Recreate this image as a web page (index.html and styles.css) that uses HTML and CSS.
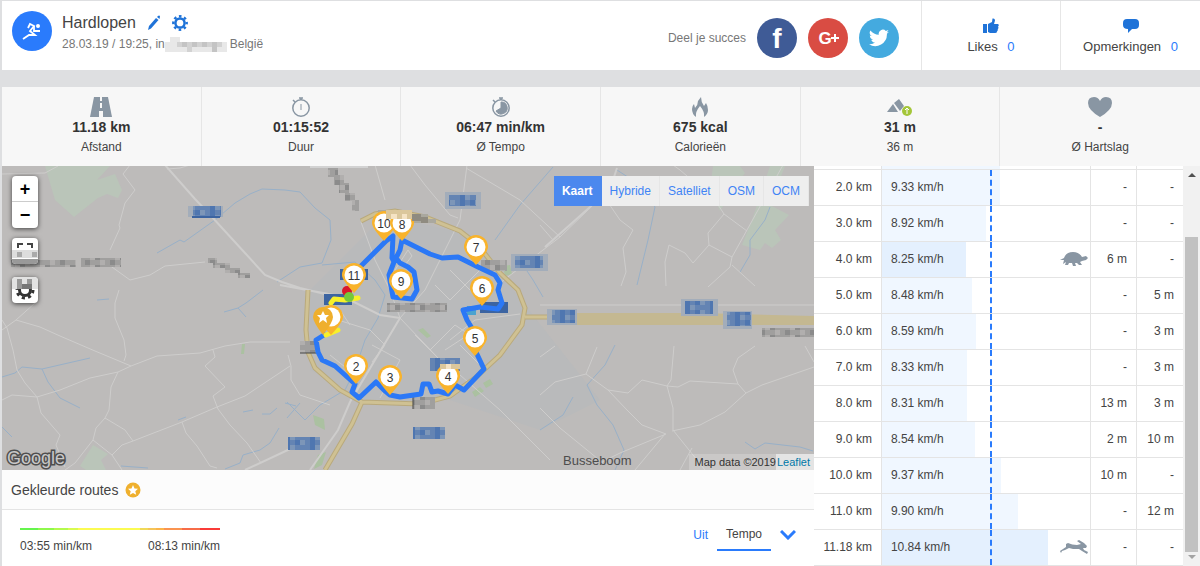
FILE: index.html
```html
<!DOCTYPE html>
<html lang="nl">

<head>
    <meta charset="UTF-8">
    <meta name="viewport" content="width=device-width, initial-scale=1.0">
    <title>Hardlopen</title>
    <link rel="stylesheet" href="styles.css">
</head>

<body>

    <header class="activity">
        <div class="sport-icon">
            <svg width="22" height="20" viewBox="0 0 22 20" fill="none" stroke="#fff" stroke-width="2">
                <circle cx="17" cy="5" r="2" fill="#fff" stroke="none" />
                <path d="M7 7L9 3L13 5L9 10L14 14L8 14L2 18" stroke-width="1.800" />
                <path d="M13 5L13 10L19 10" stroke-width="1.800" />
            </svg>
        </div>
        <div class="activity-info">
            <div class="title-row">
                <h1>Hardlopen</h1>
                <button type="button" class="icon-btn" aria-label="Bewerken">
                    <svg width="14" height="16" viewBox="0 0 14 16" fill="#1f73d8">
                        <path d="M1 15L2 11L9 3L11.500 5L4 13.500zM10 2L11 1Q12.500 0 13 1.500L12.500 4z" />
                    </svg>
                </button>
                <button type="button" class="icon-btn" aria-label="Instellingen">
                    <svg width="16" height="16" viewBox="0 0 16 16" fill="none" stroke="#1f73d8">
                        <circle cx="8" cy="8" r="4.600" stroke-width="2.500" />
                        <circle cx="8" cy="8" r="6.700" stroke-width="2.400" stroke-dasharray="2.600 2.660" stroke-dashoffset="1.300" />
                    </svg>
                </button>
            </div>
            <p class="meta">28.03.19 / 19:25, in
                <svg class="hidden-place" width="62" height="15" viewBox="0 0 62 15" aria-hidden="true">
                    <path fill="#e8e8e8" d="M0 5h5V0h10v5h47v10H0z" />
                    <path fill="#c4c4c4" d="M17 5h5v5h-5zM27 5h5v5h-5zM37 5h5v5h-5zM47 5h5v10h-5z" />
                    <path fill="#d2d2d2" d="M12 5h5v5h-5zM22 5h5v10h-5zM32 5h5v5h-5zM42 5h5v5h-5zM52 5h5v5h-5z" />
                </svg>
                België</p>
        </div>

        <div class="share">
            <span>Deel je succes</span>
            <a href="#" class="social facebook" aria-label="Facebook">
                <svg width="40" height="40" viewBox="0 0 40 40"><text x="20" y="30" class="logo-f">f</text></svg>
            </a>
            <a href="#" class="social google" aria-label="Google+">
                <svg width="40" height="40" viewBox="0 0 40 40"><text x="17" y="26" class="logo-g">G</text><path d="M26 16h2v3h3v2h-3v3h-2v-3h-3v-2h3z" fill="#fff" /></svg>
            </a>
            <a href="#" class="social twitter" aria-label="Twitter">
                <svg width="20" height="18" viewBox="0 0 24 20" fill="#fff">
                    <path d="M24 2.400a10 10 0 0 1-2.800.8A5 5 0 0 0 23.300.500a10 10 0 0 1-3.100 1.200A4.900 4.900 0 0 0 11.800 6.200 14 14 0 0 1 1.700 1a4.900 4.900 0 0 0 1.500 6.600 5 5 0 0 1-2.200-.6c0 2.400 1.600 4.400 3.900 4.900a5 5 0 0 1-2.200.1 4.900 4.900 0 0 0 4.600 3.400A10 10 0 0 1 0 17.400 14 14 0 0 0 21.500 5z" />
                </svg>
            </a>
        </div>

        <button type="button" class="social-count likes">
            <svg width="16" height="16" viewBox="0 0 16 16" fill="#1f73d8">
                <path d="M0 6h4v9H0z M5 6 L9 4 L9.500 0.500 Q12 0 12 2.500 L11 6 H15 Q16.500 7 15 8.500 Q16 10 14.800 11 Q15 13 14 13.500 Q14 15 12 15 H7 L5 14z" />
            </svg>
            <span>Likes <b>0</b></span>
        </button>
        <button type="button" class="social-count comments">
            <svg width="16" height="16" viewBox="0 0 16 16" fill="#1f73d8">
                <path d="M4 1h8q4 0 4 4v2q0 4-4 4H9l-4 4v-4Q0 11 0 7V5q0-4 4-4z" />
            </svg>
            <span>Opmerkingen <b>0</b></span>
        </button>
    </header>

    <!-- kerncijfers -->
    <section class="stats">
        <div class="stat">
            <svg width="22" height="20" viewBox="0 0 22 20">
                <path fill="#8996a3" d="M4 0h14l4 20H0z" />
                <path fill="#f7f7f7" d="M10 0h2v4h-2zM10 6h2v5h-2zM9 14h4v6H9z" />
            </svg>
            <strong>11.18 km</strong>
            <span>Afstand</span>
        </div>
        <div class="stat">
            <svg width="20" height="20" viewBox="0 0 20 20" fill="none" stroke="#8996a3">
                <circle cx="10" cy="11" r="8.200" stroke-width="1.500" />
                <path d="M8 1h4M10 1v2M2 3l2 2" stroke-width="1.500" />
                <path d="M10 7v6" />
            </svg>
            <strong>01:15:52</strong>
            <span>Duur</span>
        </div>
        <div class="stat">
            <svg width="20" height="20" viewBox="0 0 20 20" fill="none" stroke="#8996a3">
                <circle cx="10" cy="11" r="8.200" stroke-width="1.500" />
                <path d="M8 1h4M10 1v2M2 3l2 2" stroke-width="1.500" />
                <path d="M10 11V5a6 6 0 1 1-5 9z" fill="#8996a3" />
            </svg>
            <strong>06:47 min/km</strong>
            <span>Ø Tempo</span>
        </div>
        <div class="stat">
            <svg width="18" height="20" viewBox="0 0 18 20" fill="#8996a3">
                <path d="M5 20Q1 17 1 12Q1 9 3 7L4 11Q7 8 7 4L10 0Q10 5 13 9L15 6Q17 9 17 13Q17 17 13 20Q14 15 9 9Q4 15 5 20z" />
            </svg>
            <strong>675 kcal</strong>
            <span>Calorieën</span>
        </div>
        <div class="stat">
            <svg width="26" height="20" viewBox="0 0 26 20">
                <path fill="#8996a3" d="M0 15L6 7L11 15zM7 6L12 2L17 9L13 14z" />
                <circle cx="20" cy="14" r="5" fill="#a4c639" />
                <path d="M20 17v-5M18 13l2-2 2 2" stroke="#fff" fill="none" />
            </svg>
            <strong>31 m</strong>
            <span>36 m</span>
        </div>
        <div class="stat">
            <svg width="26" height="20" viewBox="0 0 26 20" fill="#8996a3">
                <path d="M13 20Q1 13 1 6Q1 0 7 0Q11 0 13 4Q15 0 19 0Q25 0 25 6Q25 13 13 20z" />
            </svg>
            <strong>-</strong>
            <span>Ø Hartslag</span>
        </div>
    </section>

    <main class="content">
        <div class="left">
            <div class="map">
                <svg class="map-canvas" viewBox="2 166 812 304" preserveAspectRatio="xMidYMid slice">
                    <defs>
                        <pattern id="mosaic-blue" width="25" height="10" patternUnits="userSpaceOnUse">
                            <path fill="#6484b3" d="M0 0h25v10H0z" />
                            <path fill="#7d96b8" d="M0 0h5v5H0zM15 5h5v5h-5z" />
                            <path fill="#4f76b0" d="M10 0h5v10h-5zM20 0h5v5h-5z" />
                        </pattern>
                        <pattern id="mosaic-gray" width="25" height="10" patternUnits="userSpaceOnUse">
                            <path fill="#a09f9e" d="M0 0h25v10H0z" />
                            <path fill="#b1afae" d="M0 0h5v5H0zM15 5h5v5h-5z" />
                            <path fill="#8b8b8b" d="M10 0h5v5h-5zM20 5h5v5h-5z" />
                        </pattern>
                        <g id="pin">
                            <path fill="#f9b32b" d="M-12 0A12 12 0 1 1 12 0Q12 5 0 18Q-12 5-12 0z" />
                            <circle r="9.500" fill="#fff" />
                        </g>
                    </defs>

                    <rect x="2" y="166" width="812" height="304" fill="#bdbbba" />
                    <path fill="#b9babb" d="M310 290L385 215L470 235L525 305L600 400L540 430L450 400L370 402L310 370z" />

                    <!-- parken -->
                    <g fill="#bac5b9">
                        <path d="M45 166H110L97 180L115 174L122 190L118 198L107 194L98 198L84 209L74 217L55 200z" />
                        <path d="M93 445L108 454L101 460L106 470H86L80 466z" />
                        <path d="M713 166H740L745 173L733 190L720 211L710 190z" />
                        <path d="M770 166H785L770 205L789 215L775 230L781 240L772 248L765 243L760 250L742 245L752 220z" />
                        <path fill="#abc1a1" d="M242 344H245L244 354H241zM418 330L423 328L431 336L427 338zM472 392L480 387L484 391L475 397zM483 383L490 379L493 384L486 388zM503 266L510 265L512 274L505 276zM313 415L324 419L325 430L315 425zM318 455L326 452L322 465L314 469z" />
                    </g>

                    <!-- water -->
                    <g class="water">
                        <path d="M157 253L180 240L184 242L215 220L235 203L250 194L262 189L285 190L300 192L315 208L330 220L331 240L322 263L300 267L277 282" />
                        <path d="M263 290L250 300L246 303L238 308L224 312M238 308L246 317M97 300L109 299" />
                        <path d="M2 377L15 373L22 367L42 369L90 358M42 369L48 382L60 398L80 408M2 427L12 437" />
                        <path d="M279 428L270 443L260 450L243 455L240 463L225 469M121 466L148 468M287 418L300 403M285 403L296 406M243 412L253 410M262 414L270 414L277 408M178 420L186 417" />
                        <path d="M322 265L355 262L375 280L385 295L378 318L365 340L355 370L345 390L320 405L305 420L287 402" />
                        <path d="M553 167L520 205L495 240M523 265L533 280L543 297" />
                        <path d="M617 170L640 185L655 207L648 240L637 285M615 345L605 365L587 385L597 405L613 425L624 450L615 470" />
                        <path d="M540 430L563 415L573 397M770 207L765 220L750 240L750 255L740 272M745 442L755 449L765 443L800 447L813 451" />
                    </g>

                    <!-- wegen -->
                    <g class="road">
                        <path d="M2 174L45 173L58 166M130 165L123 174L135 190L125 203L119 225L120 228L110 250M119 290L115 303V318L124 340L126 355L124 361" />
                        <path d="M35 303L16 320L2 330M16 320L40 327L60 336L95 351L131 366L157 356L200 353L225 346L250 342L290 342" />
                        <path d="M2 320L7 328L13 350L17 370L25 383L37 397L12 395L2 400M37 397L41 413L60 435L56 445L65 467" />
                        <path d="M37 397L60 390L90 378L118 372L131 366M118 372L111 387L109 410L105 418L96 428L93 440L75 463L65 470" />
                        <path d="M105 418L125 430L133 441M93 440L112 455L122 470M112 455L122 445L133 441L182 422L217 407L245 396L290 366" />
                        <path d="M182 422L186 433L197 446L210 466L217 468M213 350L215 357L205 366L225 387L213 396L218 409L230 425L247 443L261 463" />
                        <path d="M288 355L291 366V380L300 395L330 405M167 169L180 168L190 165M105 262L130 280L150 275L165 266L205 262" />
                        <path d="M385 200L375 165M410 165L425 185L450 215L458 218M466 168L520 200L560 237M500 283L560 237L617 182" />
                        <path d="M467 165L460 220L445 250L425 290L400 318M361 222L375 260L390 290L400 318M400 318L440 360L460 375L500 410L550 460" />
                        <path d="M540 225L553 240M605 198L620 220L633 230L623 248L626 272L621 286M540 305H814" />
                        <path d="M666 286L665 262L669 245L685 253L693 263L709 245L708 233L724 214L747 231M709 245L732 257L783 165M732 257L730 267L708 287M724 214L715 200L680 170L673 165M732 265L755 286" />
                        <path d="M674 346L671 380L667 386L673 408V430L705 470M540 395L555 382L586 374L608 390L627 410L642 425L666 434L620 453L600 463M586 374L597 347" />
                        <path d="M608 390L628 393L642 380L667 386L678 387L690 381L738 384L746 393L725 412L700 425L672 431M738 384L733 370L738 358L755 346" />
                        <path d="M746 393L762 385L814 367M805 346L814 362M665 434L635 470M692 448L680 470M540 408L560 428L603 463M540 357L555 346" />
                        <path d="M330 355L345 367M372 345L400 360L380 398M338 320L370 330L385 345L372 362M400 318L370 368L350 400M415 335L430 350L455 325L470 335M430 350L450 370M435 285L450 300L480 270M450 270L470 290M395 270L408 250L412 256L405 265M460 345L480 365M450 340L475 320L520 314M445 350L468 335M340 310L350 325" />
                    </g>
                    <path class="road wide" d="M165 165L195 199L212 217L245 253L265 275L282 282L300 288L350 300L380 315L400 318M245 470L290 449M617 168L612 183L590 207L545 247M400 318L350 402L338 430L310 470M280 285L345 297" />

                    <!-- ringweg -->
                    <path class="ring edge" d="M361 221L375 214L395 211L425 217L460 231L478 245L500 273L518 290L525 308L522 325L500 355L475 378L450 396L420 404L362 402L340 390L315 368L308 352L306 330L308 290M362 402L352 424L325 470M525 317H570" />
                    <path class="ring" d="M361 221L375 214L395 211L425 217L460 231L478 245L500 273L518 290L525 308L522 325L500 355L475 378L450 396L420 404L362 402L340 390L315 368L308 352L306 330L308 290M362 402L352 424L325 470M525 317H570" />
                    <path fill="#c4b891" d="M560 313H700L814 316V325H560z" />

                    <!-- wegnummers en plaatsnamen -->
                    <path fill="#a3adba" d="M188 206H223V217H188zM445 192H481V209H445zM511 254H548V271H511zM681 299H718V316H681zM723 311H752V329H723zM547 309H577V325H547z" />
                    <path fill="url(#mosaic-blue)" d="M193 206H221V217H193zM449 195H476V206H449zM515 256H543V268H515zM685 301H713V314H685zM727 312H751V326H727zM552 310H575V323H552zM288 437H320V450H288zM413 427H445V439H413zM430 358H460V371H430z" />
                    <path fill="#3c64a1" d="M192 216H220V218H192zM340 269H368V280H340zM324 294H352V305H324zM480 302H508V313H480z" />
                    <rect x="467" y="306" width="9" height="9" fill="#4ba3cf" />
                    <path fill="url(#mosaic-gray)" d="M11 260H76V267H11zM81 258H121V267H81zM300 341H318V353H300zM413 397H435V409H413zM481 260H507V271H481zM762 328H814V337H762z" />
                    <path fill="url(#mosaic-gray)" d="M208 258H217V263H230V268H240V273H250V278H238V273H225V268H213V263H208zM328 168H338V175H344V183H349V193H355V200H359V211H352V201H345V193H339V185H334V177H328z" />
                    <path fill="#aaa89e" d="M378 210H405V214H428V219H436V223H410V218H378z" />
                    <path d="M300 353H318M413 397V409" stroke="#444" />
                    <path d="M310 166H368V168H310z" fill="#d2d2d2" />
                    <text x="563" y="465" class="place">Busseboom</text>

                    <!-- route -->
                    <path class="route" d="M350 288L358 269L386 241L393 236L392 258L394 262L389 275L393 297L412 299L417 290L414 272L408 267L400 263L396 258L400 250L402 240L418 248L430 254L442 258L458 257L468 262L478 267L495 275L500 283L498 290L502 303L498 309L480 307L463 310L467 320L473 330L475 350L484 369L464 390L455 385L448 394L438 391L432 392L429 384L423 384L421 394L400 397L390 395L384 390L376 382L359 398L352 392L355 384L335 366L322 360L318 352L316 340L324 335" />
                    <path class="route slow" d="M326 335L338 330M331 303L334 299L345 300L358 298" />
                    <rect x="387" y="303" width="60" height="9" fill="url(#mosaic-gray)" />

                    <circle cx="347" cy="291" r="5" fill="#d8182b" />
                    <circle cx="349" cy="297" r="5" fill="#74c83a" />
                    <g class="pins">
                        <g transform="translate(384 223)"><use href="#pin" /><text y="5">10</text></g>
                        <g transform="translate(402 223)"><use href="#pin" /><text y="6">8</text></g>
                        <g transform="translate(354 275)"><use href="#pin" /><text y="5">11</text></g>
                        <g transform="translate(401 281)"><use href="#pin" /><text y="5">9</text></g>
                        <g transform="translate(476 247)"><use href="#pin" /><text y="5">7</text></g>
                        <g transform="translate(482 288)"><use href="#pin" /><text y="5">6</text></g>
                        <g transform="translate(475 338)"><use href="#pin" /><text y="5">5</text></g>
                        <g transform="translate(448 376)"><use href="#pin" /><text y="5">4</text></g>
                        <g transform="translate(390 377)"><use href="#pin" /><text y="5">3</text></g>
                        <g transform="translate(356 366)"><use href="#pin" /><text y="5">2</text></g>
                        <use href="#pin" x="331" y="317" />
                        <g transform="translate(323 317)">
                            <path fill="#efaf2d" d="M-10 0A10 10 0 1 1 10 0Q10 5 0 18Q-10 5-10 0z" />
                            <path fill="#fff" d="M0-6L2-2L6-2L3 1L4 6L0 3L-4 6L-3 1L-6-2L-2-2z" />
                        </g>
                    </g>
                    <!-- vervaagde strook over de spelden 8, 10 en 4 -->
                    <path fill="#dbc79c" d="M386 210H412V219H386zM440 364H460V369H440z" />
                    <path fill="#f5e3c4" d="M391 214H397V219H391zM402 214H407V219H402zM446 364H451V369H446z" />
                    <path fill="#8f8b80" d="M412 214H421V221H412zM421 217H428V223H421z" />

                    <text x="7" y="464" class="google-logo">Google</text>
                </svg>

                <div class="map-tools">
                    <div class="zoom">
                        <button type="button" aria-label="Inzoomen">+</button>
                        <button type="button" aria-label="Uitzoomen">−</button>
                    </div>
                    <button type="button" class="tool" aria-label="Volledig scherm">
                        <svg width="26" height="26" viewBox="0 0 26 26">
                            <path d="M6 10V6h5M15 6h5v4" fill="none" stroke="#444" stroke-width="2" />
                            <path fill="#ddd" d="M0 12h26v8H0z" />
                            <path fill="#aaa" d="M5 14h5v5H5zM20 14h5v5h-5z" />
                            <path fill="#999" d="M0 21h26v5H0z" />
                        </svg>
                    </button>
                    <button type="button" class="tool" aria-label="Kaartinstellingen">
                        <svg width="26" height="26" viewBox="0 0 26 26">
                            <g fill="none" stroke="#333">
                                <circle cx="13" cy="13" r="5.500" stroke-width="3" />
                                <circle cx="13" cy="13" r="8" stroke-width="3" stroke-dasharray="3.140 3.143" />
                            </g>
                            <path fill="#e2e2e2" d="M0 0h26v12H0z" />
                            <path fill="#999" d="M5 2h5v5H5zM15 2h5v5h-5zM5 7h5v5H5z" />
                            <path fill="#777" d="M10 7h10v5H10z" />
                        </svg>
                    </button>
                </div>

                <div class="map-types">
                    <button type="button" class="on">Kaart</button>
                    <button type="button">Hybride</button>
                    <button type="button">Satelliet</button>
                    <button type="button">OSM</button>
                    <button type="button">OCM</button>
                </div>

                <div class="attribution">
                    <span>Map data ©2019</span>
                    <a href="#">Leaflet</a>
                </div>
            </div>

            <div class="routes-title">
                <h2>Gekleurde routes</h2>
                <svg width="16" height="16" viewBox="0 0 16 16">
                    <circle cx="8" cy="8" r="7.500" fill="#efb02e" />
                    <path fill="#fff" d="M8 3l1.500 3.500 3.500.3-2.700 2.400.9 3.600L8 10.900l-3.200 1.900.9-3.600L3 6.800l3.500-.3z" />
                </svg>
            </div>
            <div class="routes-body">
                <div class="legend">
                    <div class="legend-bar"></div>
                    <div class="legend-labels">
                        <span>03:55 min/km</span>
                        <span>08:13 min/km</span>
                    </div>
                </div>
                <div class="route-tabs">
                    <button type="button">Uit</button>
                    <button type="button" class="on">Tempo</button>
                    <button type="button" class="more" aria-label="Meer">
                        <svg width="16" height="10" viewBox="0 0 16 10" fill="none" stroke="#2a7bfc" stroke-width="3"><path d="M1 1l7 7 7-7" /></svg>
                    </button>
                </div>
            </div>
        </div>

        <!-- tussentijden -->
        <div class="splits">
            <table>
                <tbody>
                    <tr class="cut"><td></td><td class="speed"><div class="bar" style="width: 56.5%"></div></td><td></td><td></td></tr>
                    <tr><td>2.0 km</td><td class="speed"><div class="bar" style="width: 56.5%"></div><span>9.33 km/h</span></td><td>-</td><td>-</td></tr>
                    <tr><td>3.0 km</td><td class="speed"><div class="bar" style="width: 50.2%"></div><span>8.92 km/h</span></td><td>-</td><td>-</td></tr>
                    <tr>
                        <td>4.0 km</td>
                        <td class="speed"><div class="bar extreme" style="width: 40.2%"></div><span>8.25 km/h</span>
                            <svg class="animal" width="28" height="16" viewBox="0 0 28 16" fill="#8996a3">
                                <path d="M0 9L4 7Q6 1 13 1Q19 1 22 6L26 5L28 7L26 9L22 10L20 11L22 14H19L17 12H15L16 15H13L12 12H9L8 14H5L6 11L3 13L4 9z" />
                            </svg>
                        </td>
                        <td>6 m</td><td>-</td>
                    </tr>
                    <tr><td>5.0 km</td><td class="speed"><div class="bar" style="width: 43.5%"></div><span>8.48 km/h</span></td><td>-</td><td>5 m</td></tr>
                    <tr><td>6.0 km</td><td class="speed"><div class="bar" style="width: 45%"></div><span>8.59 km/h</span></td><td>-</td><td>3 m</td></tr>
                    <tr><td>7.0 km</td><td class="speed"><div class="bar" style="width: 41.1%"></div><span>8.33 km/h</span></td><td>-</td><td>3 m</td></tr>
                    <tr><td>8.0 km</td><td class="speed"><div class="bar" style="width: 40.7%"></div><span>8.31 km/h</span></td><td>13 m</td><td>3 m</td></tr>
                    <tr><td>9.0 km</td><td class="speed"><div class="bar" style="width: 44.5%"></div><span>8.54 km/h</span></td><td>2 m</td><td>10 m</td></tr>
                    <tr><td>10.0 km</td><td class="speed"><div class="bar" style="width: 57.4%"></div><span>9.37 km/h</span></td><td>10 m</td><td>-</td></tr>
                    <tr><td>11.0 km</td><td class="speed"><div class="bar" style="width: 65.5%"></div><span>9.90 km/h</span></td><td>-</td><td>12 m</td></tr>
                    <tr>
                        <td>11.18 km</td>
                        <td class="speed"><div class="bar extreme" style="width: 79.9%"></div><span>10.84 km/h</span>
                            <svg class="animal" width="28" height="16" viewBox="0 0 28 16" fill="#8996a3">
                                <path d="M0 12L6 8L6 5L8 4Q12 6 17 6L21 5L17 2L19 1L24 4L27 7L26 9L23 9L24 11L28 13L27 15L22 12L19 10L13 10L9 9L5 11L2 12L1 14z" />
                            </svg>
                        </td>
                        <td>-</td><td>-</td>
                    </tr>
                </tbody>
            </table>
            <div class="scrollbar" aria-hidden="true">
                <i class="arrow up"></i>
                <i class="thumb"></i>
                <i class="arrow down"></i>
            </div>
        </div>
    </main>

</body>

</html>
```

FILE: styles.css
```css
* {
    box-sizing: border-box;
}

body {
    margin: 0;
    padding: 1px 0 0 2px;
    background: #dedfe1;
    color: #444;
    font-family: "Liberation Sans", Arial, sans-serif;
    font-size: 12px;
}

h1,
h2,
p {
    margin: 0;
    font-weight: normal;
}

button {
    margin: 0;
    padding: 0;
    border: none;
    background: none;
    font: inherit;
    color: inherit;
    cursor: pointer;
}

svg {
    display: block;
}

/* kop */
.activity {
    display: flex;
    height: 69px;
    background: #fff;
}

.sport-icon {
    display: flex;
    align-items: center;
    justify-content: center;
    width: 40px;
    height: 40px;
    margin: 10px 10px 0;
    border-radius: 50%;
    background: #2a7bfc;
}

.activity-info {
    flex: 1;
    padding-top: 12px;
}

.title-row {
    display: flex;
    align-items: center;
    gap: 11px;
    height: 20px;
}

h1 {
    font-size: 16px;
}

.meta {
    display: flex;
    align-items: center;
    height: 20px;
    margin-top: 1px;
    color: #777;
}

.hidden-place {
    margin-right: 3px;
}

.share {
    display: flex;
    align-items: center;
    gap: 11px;
    margin: 5px 22px 0 0;
    color: #777;
}

.social {
    display: flex;
    align-items: center;
    justify-content: center;
    width: 40px;
    height: 40px;
    border-radius: 50%;
}

.facebook { background: #3f5b96; }
.google { background: #d94c43; }
.twitter { background: #44aadf; }

.logo-f,
.logo-g {
    fill: #fff;
    font-weight: bold;
    text-anchor: middle;
}

.logo-f { font-size: 28px; }
.logo-g { font-size: 17px; }

.social-count {
    display: flex;
    flex-direction: column;
    align-items: center;
    gap: 5px;
    padding-top: 17px;
    border-left: 1px solid #e6e6e6;
    font-size: 13px;
}

.social-count b {
    margin-left: 6px;
    color: #2a7bfc;
    font-weight: normal;
}

.likes { width: 139px; }
.comments { width: 140px; }

/* kerncijfers */
.stats {
    display: grid;
    grid-template-columns: repeat(6, 1fr);
    margin-top: 17px;
    background: #f7f7f7;
}

.stat {
    display: flex;
    flex-direction: column;
    align-items: center;
    height: 79px;
    padding-top: 10px;
    border-right: 1px solid #e6e6e6;
}

.stat:last-child {
    border-right: none;
}

.stat strong {
    height: 20px;
    color: #333;
    font-size: 14px;
    line-height: 20px;
}

.stat span {
    line-height: 20px;
}

.content {
    display: grid;
    grid-template-columns: minmax(0, 1fr) 386px;
}

.left {
    background: #fff;
}

/* kaart */
.map {
    position: relative;
    height: 304px;
}

.map-canvas {
    width: 100%;
    height: 100%;
}

.water {
    fill: none;
    stroke: #98b0c8;
}

.road {
    fill: none;
    stroke: #cecdcc;
    stroke-width: 1px;
}

.road.wide {
    stroke-width: 2px;
}

.ring {
    fill: none;
    stroke: #cfc193;
    stroke-width: 3px;
}

.ring.edge {
    stroke: #b9a97c;
    stroke-width: 5px;
}

.route {
    fill: none;
    stroke: #2b78f6;
    stroke-width: 5px;
    stroke-linejoin: round;
    stroke-linecap: round;
}

.route.slow {
    stroke: #f7f02a;
}

.pins text {
    fill: #333;
    font-size: 12px;
    text-anchor: middle;
}

.place {
    fill: #4d4d4d;
    font-size: 13px;
}

.google-logo {
    fill: #c9c8c8;
    stroke: #4f4f4f;
    stroke-width: 3px;
    paint-order: stroke;
    font-size: 18px;
}

.map-tools {
    position: absolute;
    top: 10px;
    left: 10px;
    display: flex;
    flex-direction: column;
    gap: 10px;
}

.zoom,
.tool {
    width: 26px;
    border-radius: 4px;
    background: #fff;
    box-shadow: 0 1px 5px rgba(0, 0, 0, 0.65);
    overflow: hidden;
}

.tool {
    height: 26px;
}

.zoom button {
    display: block;
    width: 100%;
    height: 26px;
    color: #000;
    font-size: 18px;
    font-weight: bold;
    line-height: 26px;
}

.zoom button:first-child {
    border-bottom: 1px solid #ccc;
}

.tool + .tool {
    margin-top: 3px;
}

.map-types {
    position: absolute;
    top: 10px;
    right: 5px;
    display: flex;
}

.map-types button {
    height: 30px;
    padding: 0 8px;
    border-right: 1px solid #e6e6e6;
    background: #eee;
    color: #3f84f5;
}

.map-types .on {
    border-color: #4b88ee;
    background: #4b88ee;
    color: #fff;
    font-weight: bold;
}

.attribution {
    position: absolute;
    right: 0;
    bottom: 0;
    display: flex;
    color: #333;
    font-size: 11px;
    line-height: 16px;
}

.attribution span {
    padding-left: 5px;
    background: rgba(255, 255, 255, 0.2);
}

.attribution a {
    padding: 0 4px 0 1px;
    background: #e4e4e4;
    color: #0078a8;
    text-decoration: none;
}

/* gekleurde routes */
.routes-title {
    display: flex;
    align-items: center;
    gap: 7px;
    height: 40px;
    padding-left: 9px;
    border-bottom: 1px solid #e4e4e4;
    background: #fcfcfc;
}

h2 {
    font-size: 14px;
}

.routes-body {
    display: flex;
    justify-content: space-between;
    padding: 8px 18px 0;
}

.legend {
    width: 200px;
    padding-top: 10px;
}

.legend-bar {
    height: 2px;
    background: linear-gradient(to right, #65f44d 0 9%, #8ef84c 0 17%, #b3fa4d 0 24%, #d8fb50 0 29%, #fbfb52 0 60%, #f0d958 0 64%, #f5c458 0 68%, #fbb44a 0 72%, #fa9450 0 81%, #f76c48 0 90%, #f93b38 0);
}

.legend-labels {
    display: flex;
    justify-content: space-between;
    margin-top: 9px;
}

.route-tabs {
    display: flex;
    align-items: flex-start;
    gap: 9px;
}

.route-tabs button {
    height: 33px;
    color: #2a7bfc;
}

.route-tabs .on {
    padding: 0 9px;
    border-bottom: 2px solid #2a7bfc;
    color: #444;
}

/* tussentijden */
.splits {
    display: flex;
    background: #fff;
}

table {
    flex: 1;
    border-collapse: separate;
    border-spacing: 0;
    table-layout: fixed;
}

td {
    width: 46px;
    height: 36px;
    padding: 0 9px 2px 0;
    border-bottom: 1px solid #e4e4e4;
    border-right: 1px solid #e4e4e4;
    text-align: right;
}

td:first-child {
    width: 68px;
}

td:last-child {
    border-right: none;
}

/* balk en gemiddelde liggen achter de tekst */
.speed {
    position: relative;
    width: 210px;
    padding: 0 0 2px 9px;
    text-align: left;
}

.speed span {
    position: relative;
}

.speed::after {
    content: "";
    position: absolute;
    top: 0;
    bottom: 0;
    left: 52%;
    border-left: 2px dashed #2a7bfc;
}

.bar {
    position: absolute;
    top: 0;
    bottom: 0;
    left: 0;
    background: #f0f7ff;
}

.bar.extreme {
    background: #e4f0fe;
}

.animal {
    position: absolute;
    top: 9px;
    right: 2px;
}

.cut td {
    height: 4px;
}

.cut .speed::after {
    display: none;
}

.scrollbar {
    display: flex;
    flex-direction: column;
    align-items: center;
    width: 17px;
    padding: 7px 0;
    background: #f1f1f1;
}

.thumb {
    flex: 1;
    width: 13px;
    margin: 60px 0 3px;
    background: #c1c1c1;
}

.arrow {
    border: 4px solid transparent;
}

.arrow.up {
    border-top: none;
    border-bottom-color: #505050;
}

.arrow.down {
    border-bottom: none;
    border-top-color: #a3a3a3;
}
```
